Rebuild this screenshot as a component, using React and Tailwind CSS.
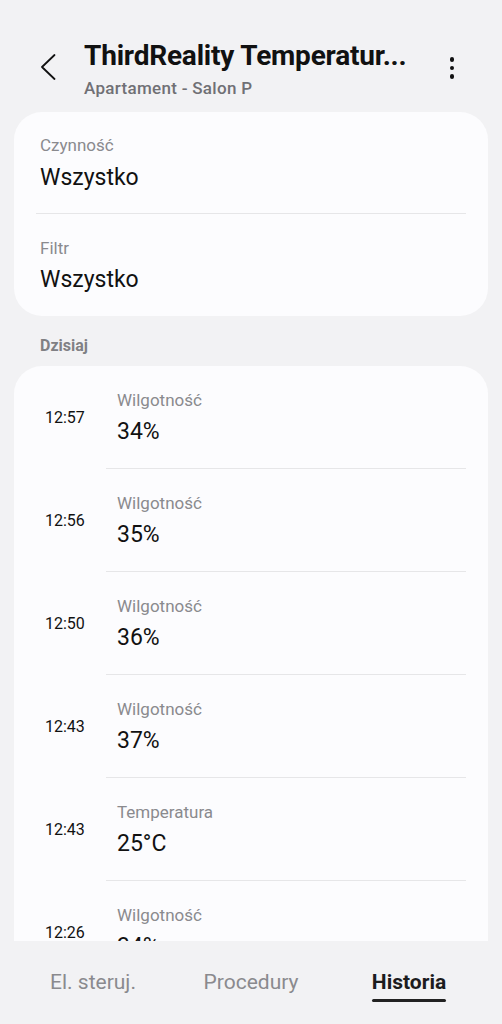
const rows = [
    { time: '12:57', label: 'Wilgotność', value: '34%' },
    { time: '12:56', label: 'Wilgotność', value: '35%' },
    { time: '12:50', label: 'Wilgotność', value: '36%' },
    { time: '12:43', label: 'Wilgotność', value: '37%' },
    { time: '12:43', label: 'Temperatura', value: '25°C' },
    { time: '12:26', label: 'Wilgotność', value: '34%' },
    { time: '12:20', label: 'Wilgotność', value: '35%' },
];

const tabs = [
    { name: 'El. steruj.', active: false },
    { name: 'Procedury', active: false },
    { name: 'Historia', active: true },
];

export default function App() {
    return (
        <div
            className="h-[1024px] w-full bg-[#f2f2f4] flex flex-col overflow-hidden text-[#111]"
            style={{ fontFamily: 'Roboto, "Noto Sans", sans-serif' }}
        >
            <div className="flex-1 overflow-hidden">
                {/* Header */}
                <div className="flex items-start pt-[40px] pl-[40px] pr-[38px] h-[112px]">
                    <svg className="mt-[14px] w-[16px] h-[26px] shrink-0" viewBox="0 0 16 26" fill="none">
                        <path d="M14.5 1 L2 13 L14.5 25" stroke="#111" strokeWidth="1.8" strokeLinecap="round" strokeLinejoin="round" />
                    </svg>
                    <div className="ml-[28px] flex-1 min-w-0">
                        <h1 className="text-[28px] leading-[32px] font-bold truncate tracking-[-0.2px]">
                            ThirdReality Temperatur...
                        </h1>
                        <p className="mt-[6px] text-[17px] leading-[20px] font-medium text-[#707075] tracking-[0.3px]">
                            Apartament - Salon P
                        </p>
                    </div>
                    <div className="mt-[17px] w-[24px] flex flex-col items-center gap-[4px]">
                        <span className="w-[4.5px] h-[4.5px] rounded-full bg-[#111]" />
                        <span className="w-[4.5px] h-[4.5px] rounded-full bg-[#111]" />
                        <span className="w-[4.5px] h-[4.5px] rounded-full bg-[#111]" />
                    </div>
                </div>

                {/* Filters */}
                <div className="mx-[14px] bg-[#fcfcfe] rounded-[28px] px-[22px]">
                    <div className="pt-[23px] pb-[21px] border-b border-[#e6e6e8]">
                        <p className="text-[17px] leading-[20px] text-[#8a8a8e] pl-[4px]">Czynność</p>
                        <p className="mt-[9px] text-[23px] leading-[28px] pl-[4px]">Wszystko</p>
                    </div>
                    <div className="pt-[24px] pb-[22px]">
                        <p className="text-[17px] leading-[20px] text-[#8a8a8e] pl-[4px]">Filtr</p>
                        <p className="mt-[8px] text-[23px] leading-[28px] pl-[4px]">Wszystko</p>
                    </div>
                </div>

                {/* Today */}
                <p className="pl-[40px] pt-[20px] pb-[10px] text-[16px] leading-[20px] font-bold text-[#808084]">Dzisiaj</p>
                <div className="mx-[14px] bg-[#fcfcfe] rounded-t-[28px] pr-[22px]">
                    {rows.map((row, i) => (
                        <div key={i} className="flex items-center">
                            <div className="w-[92px] pl-[31px] text-[16px] leading-[20px]">{row.time}</div>
                            <div className="flex-1 pt-[23px] pb-[21px] border-b border-[#e6e6e8] pl-[11px]">
                                <p className="text-[17px] leading-[22px] text-[#8a8a8e]">{row.label}</p>
                                <p className="mt-[6px] text-[23px] leading-[30px]">{row.value}</p>
                            </div>
                        </div>
                    ))}
                </div>
            </div>

            {/* Bottom tabs */}
            <div className="h-[83px] shrink-0 grid grid-cols-3 px-[14px] bg-[#f2f2f4]">
                {tabs.map((tab) => (
                    <div key={tab.name} className="flex justify-center pt-[28px]">
                        <div className="flex flex-col items-center">
                            <span
                                className={
                                    tab.active
                                        ? 'text-[21px] leading-[26px] font-bold text-[#1c1c1e]'
                                        : 'text-[21px] leading-[26px] text-[#8a8a8e]'
                                }
                            >
                                {tab.name}
                            </span>
                            {tab.active && <span className="mt-[4px] h-[3px] w-full rounded-full bg-[#222]" />}
                        </div>
                    </div>
                ))}
            </div>
        </div>
    );
}
